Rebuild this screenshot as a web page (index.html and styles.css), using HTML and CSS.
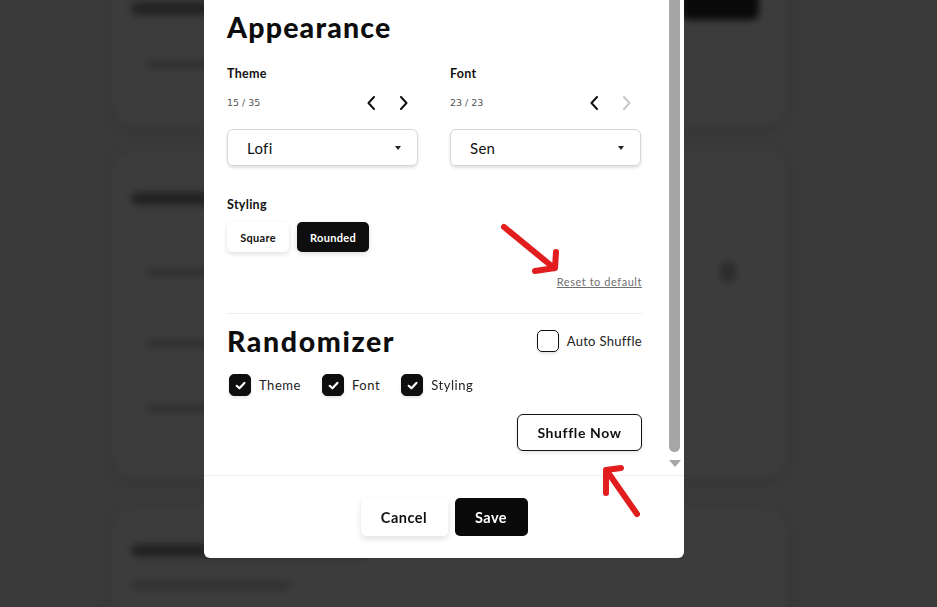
FILE: index.html
```html
<!DOCTYPE html>
<html lang="en">
<head>
<meta charset="utf-8">
<title>Appearance settings</title>
<link rel="stylesheet" href="styles.css">
</head>
<body>
<div class="page">
  <div class="card card-one">
    <div class="card-head">
      <div class="blur-bar bar-head"></div>
      <div class="blur-btn"></div>
    </div>
    <div class="blur-row">
      <div class="blur-bar bar-line"></div>
    </div>
  </div>
  <div class="card card-two">
    <div class="blur-bar bar-head"></div>
    <div class="blur-row"><div class="blur-bar bar-line"></div><div class="blur-dot"></div></div>
    <div class="blur-row"><div class="blur-bar bar-line"></div></div>
    <div class="blur-row"><div class="blur-bar bar-line"></div></div>
  </div>
  <div class="card card-three">
    <div class="blur-bar bar-head"></div>
    <div class="blur-bar bar-sub"></div>
  </div>
</div>

<div class="modal">
  <div class="modal-body">
    <div class="content">
      <h1 class="section-title">Appearance</h1>
      <div class="cols">
        <div class="col">
          <div class="field-label">Theme</div>
          <div class="counter-row">
            <span class="counter">15 / 35</span>
            <div class="nav">
              <svg class="chev" viewBox="0 0 8 14"><polyline points="7,1 1.5,7 7,13"/></svg>
              <svg class="chev" viewBox="0 0 8 14"><polyline points="1,1 6.5,7 1,13"/></svg>
            </div>
          </div>
          <div class="select"><span>Lofi</span><span class="caret"></span></div>
        </div>
        <div class="col">
          <div class="field-label">Font</div>
          <div class="counter-row">
            <span class="counter">23 / 23</span>
            <div class="nav">
              <svg class="chev" viewBox="0 0 8 14"><polyline points="7,1 1.5,7 7,13"/></svg>
              <svg class="chev chev-off" viewBox="0 0 8 14"><polyline points="1,1 6.5,7 1,13"/></svg>
            </div>
          </div>
          <div class="select"><span>Sen</span><span class="caret"></span></div>
        </div>
      </div>

      <div class="field-label styling-label">Styling</div>
      <div class="seg">
        <button class="seg-btn">Square</button>
        <button class="seg-btn seg-on">Rounded</button>
      </div>

      <div class="reset-row"><a class="reset" href="#">Reset to default</a></div>

      <div class="divider"></div>

      <div class="rand-head">
        <h2 class="section-title title-rand">Randomizer</h2>
        <label class="check-item auto">
          <span class="box"></span><span>Auto Shuffle</span>
        </label>
      </div>

      <div class="check-row">
        <label class="check-item">
          <span class="box box-on"><svg viewBox="0 0 12 12"><polyline points="2.5,6.3 5,8.6 9.6,3.6"/></svg></span><span>Theme</span>
        </label>
        <label class="check-item">
          <span class="box box-on"><svg viewBox="0 0 12 12"><polyline points="2.5,6.3 5,8.6 9.6,3.6"/></svg></span><span>Font</span>
        </label>
        <label class="check-item">
          <span class="box box-on"><svg viewBox="0 0 12 12"><polyline points="2.5,6.3 5,8.6 9.6,3.6"/></svg></span><span>Styling</span>
        </label>
      </div>

      <div class="shuffle-row"><button class="shuffle">Shuffle Now</button></div>
    </div>
    <div class="scrollbar">
      <div class="thumb"></div>
      <div class="scroll-arrow"></div>
    </div>
  </div>
  <div class="modal-footer">
    <button class="btn btn-cancel">Cancel</button>
    <button class="btn btn-save">Save</button>
  </div>
</div>

<svg class="annot" width="937" height="607" viewBox="0 0 937 607">
  <g>
    <polyline points="504,227 554,268"/>
    <polyline points="556,252 555,268 535,271"/>
    <polyline points="637,514 607,471"/>
    <polyline points="621,468 606,470 606,493"/>
  </g>
</svg>
</body>
</html>
```

FILE: styles.css
```css
* { box-sizing: border-box; }

html, body {
  margin: 0;
  padding: 0;
  height: 100%;
}

body {
  background: #3a3a3a;
  overflow: hidden;
  font-family: "Lato", "Open Sans", sans-serif;
  color: #111;
  letter-spacing: 0.3px;
}

/* ---------- blurred background page ---------- */
.page {
  width: 676px;
  margin-left: 111px;
  filter: blur(3.5px);
}

.card {
  background: #3c3c3c;
  border-radius: 22px;
  box-shadow: 0 0 0 1px #363636, 0 3px 8px rgba(0, 0, 0, 0.18);
}

.card-one {
  height: 188px;
  margin-top: -62px;
  padding: 64px 28px 0 20px;
}

.card-head {
  display: flex;
  justify-content: space-between;
  align-items: flex-start;
}

.blur-btn {
  width: 78px;
  height: 30px;
  margin-top: -12px;
  background: #0a0a0a;
  border-radius: 8px;
}

.card-two {
  height: 328px;
  margin-top: 24px;
  padding: 42px 28px 0 20px;
}

.card-three {
  height: 140px;
  margin-top: 30px;
  padding: 36px 28px 0 20px;
}

.blur-bar {
  border-radius: 6px;
}

.bar-head {
  width: 240px;
  height: 13px;
  background: #222;
}

.bar-line {
  width: 200px;
  height: 9px;
  background: #303030;
  margin-left: 16px;
}

.bar-sub {
  width: 160px;
  height: 9px;
  margin-top: 24px;
  background: #313131;
}

.blur-row {
  display: flex;
  justify-content: space-between;
  align-items: center;
  margin-top: 56px;
}

.card-one .blur-row { margin-top: 40px; }

.blur-dot {
  width: 18px;
  height: 22px;
  border-radius: 50%;
  background: #2c2c2c;
  margin-right: 22px;
}

/* ---------- modal ---------- */
.modal {
  position: fixed;
  left: 204px;
  top: 0;
  width: 480px;
  height: 558px;
  background: #fff;
  border-radius: 0 0 6px 6px;
  display: flex;
  flex-direction: column;
}

.modal-body {
  height: 476px;
  display: flex;
  border-bottom: 1px solid #efefef;
}

.content {
  width: 415px;
  margin-left: 23px;
  padding-top: 12px;
}

.section-title {
  margin: 0;
  font-size: 28.5px;
  line-height: 30px;
  font-weight: 900;
  letter-spacing: 1.2px;
  color: #0d0d0d;
}

.title-rand {
  letter-spacing: 1.6px;
}

.cols {
  display: grid;
  grid-template-columns: 191px 191px;
  column-gap: 32px;
  margin-top: 24px;
}

.field-label {
  font-size: 12.5px;
  line-height: 16px;
  font-weight: 700;
  color: #111;
}

.counter-row {
  height: 20px;
  margin-top: 11px;
  display: flex;
  justify-content: space-between;
  align-items: center;
}

.counter {
  font-family: "DejaVu Sans", sans-serif;
  font-size: 9.5px;
  color: #555;
  line-height: 20px;
  letter-spacing: 0;
}

.nav {
  display: flex;
  gap: 25px;
  margin-right: 10px;
}

.chev {
  width: 8px;
  height: 14px;
  fill: none;
  stroke: #111;
  stroke-width: 2;
  stroke-linecap: round;
  stroke-linejoin: round;
}

.chev-off { stroke: #c8c8c8; }

.select {
  margin-top: 16px;
  height: 37px;
  border: 1px solid #d6d6d6;
  border-radius: 6px;
  box-shadow: 0 2px 3px rgba(0, 0, 0, 0.12);
  display: flex;
  align-items: center;
  justify-content: space-between;
  padding: 0 16px 0 19px;
  font-size: 15px;
  color: #111;
}

.caret {
  width: 0;
  height: 0;
  border-left: 3px solid transparent;
  border-right: 3px solid transparent;
  border-top: 4px solid #222;
}

.styling-label { margin-top: 31px; }

.seg {
  display: flex;
  gap: 8px;
  margin-top: 9px;
}

.seg-btn {
  height: 30px;
  border: none;
  border-radius: 5px;
  font-family: "Lato", sans-serif;
  font-size: 11px;
  font-weight: 700;
  letter-spacing: 0.3px;
  background: #fff;
  color: #111;
  box-shadow: 0 2px 5px rgba(0, 0, 0, 0.13);
  padding: 0;
  width: 62px;
}

.seg-on {
  width: 72px;
  background: #0e0e0e;
  color: #fff;
}

.reset-row {
  margin-top: 23px;
  display: flex;
  justify-content: flex-end;
  line-height: 14px;
}

.reset {
  font-size: 11px;
  color: #6f6f6f;
  letter-spacing: 0.55px;
}

.divider {
  margin-top: 24px;
  border-top: 1px solid #eeeeee;
}

.rand-head {
  margin-top: 12px;
  display: flex;
  justify-content: space-between;
  align-items: center;
}

.check-item {
  display: flex;
  align-items: center;
  gap: 8px;
  font-size: 13px;
  letter-spacing: 0.55px;
  color: #222;
}

.check-item.auto {
  letter-spacing: 0.3px;
}

.box {
  width: 22px;
  height: 22px;
  border: 1.5px solid #111;
  border-radius: 5px;
  box-shadow: 0 2px 3px rgba(0, 0, 0, 0.1);
  display: flex;
  align-items: center;
  justify-content: center;
}

.box-on {
  background: #0e0e0e;
  border-color: #0e0e0e;
}

.box svg {
  width: 13px;
  height: 13px;
  fill: none;
  stroke: #fff;
  stroke-width: 2;
  stroke-linecap: round;
  stroke-linejoin: round;
}

.check-row {
  display: flex;
  gap: 21px;
  margin-top: 18px;
  margin-left: 2px;
}

.shuffle-row {
  display: flex;
  justify-content: flex-end;
  margin-top: 18px;
}

.shuffle {
  width: 125px;
  height: 37px;
  border: 1px solid #111;
  border-radius: 6px;
  background: #fff;
  font-family: "Lato", sans-serif;
  font-size: 14px;
  font-weight: 700;
  letter-spacing: 0.6px;
  color: #111;
  box-shadow: 0 2px 4px rgba(0, 0, 0, 0.1);
}

.scrollbar {
  width: 16px;
  margin-left: 26px;
  display: flex;
  flex-direction: column;
  align-items: flex-start;
}

.thumb {
  width: 11px;
  height: 452px;
  margin-left: 1px;
  background: #a6a6a6;
  border-radius: 0 0 6px 6px;
}

.scroll-arrow {
  margin-top: 8px;
  margin-left: 1px;
  width: 0;
  height: 0;
  border-left: 6px solid transparent;
  border-right: 6px solid transparent;
  border-top: 7px solid #a6a6a6;
}

.modal-footer {
  flex: 1;
  display: flex;
  justify-content: center;
  align-items: flex-start;
  gap: 7px;
  padding-top: 22px;
}

.btn {
  height: 38px;
  border: none;
  border-radius: 5px;
  font-family: "Lato", sans-serif;
  font-size: 14.5px;
  font-weight: 700;
  letter-spacing: 0.5px;
}

.btn-cancel {
  width: 87px;
  background: #fff;
  color: #111;
  box-shadow: 0 3px 6px rgba(0, 0, 0, 0.12);
}

.btn-save {
  width: 73px;
  background: #0a0a0a;
  color: #fff;
}

/* ---------- red annotations ---------- */
.annot {
  position: fixed;
  left: 0;
  top: 0;
  pointer-events: none;
}

.annot polyline {
  fill: none;
  stroke: #e21d1d;
  stroke-width: 6;
  stroke-linecap: round;
  stroke-linejoin: round;
}
```
